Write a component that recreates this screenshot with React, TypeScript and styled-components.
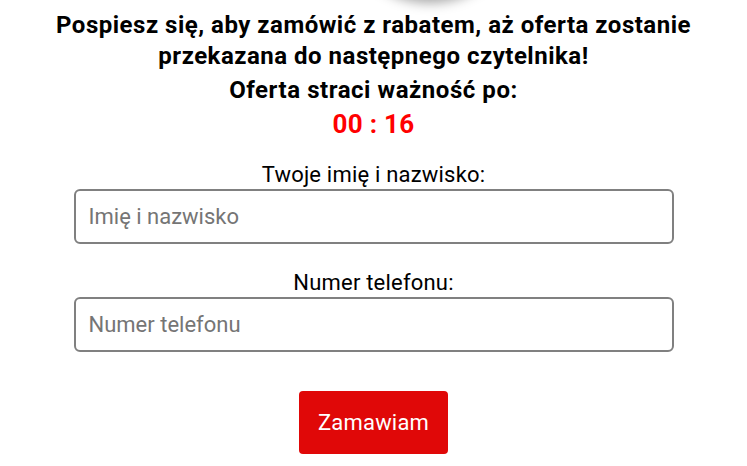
import { useState, useEffect } from 'react';
import styled, { createGlobalStyle } from "styled-components";

const GlobalStyle = createGlobalStyle`
    html, body {
        margin: 0;
        padding: 0;
        background: #ffffff;
        overflow: hidden;
    }
    body {
        font-family: Roboto, "Liberation Sans", Arial, sans-serif;
    }
`;

const Page = styled.div`
    position: relative;
    width: 747px;
    height: 466px;
    overflow: hidden;
    display: flex;
    flex-direction: column;
    align-items: center;
`;

// the product picture above is cut off, only its shadow shows
const ShadowBlob = styled.div`
    position: absolute;
    left: 340px;
    top: -180px;
    width: 180px;
    height: 180px;
    border-radius: 50%;
    background: #ffffff;
    box-shadow: 0 3px 12px rgba(0, 0, 0, 0.35);
`;

const Heading = styled.h2`
    margin: 10px 0 0 0;
    font-size: 24px;
    font-weight: 700;
    line-height: 31px;
    letter-spacing: 0.5px;
    text-align: center;
    color: #000;
    width: 690px;
`;

const SubHeading = styled.h3`
    margin: 4px 0 0 0;
    font-size: 24px;
    font-weight: 700;
    line-height: 28px;
    letter-spacing: 0.55px;
    color: #000;
`;

const Timer = styled.div`
    margin-top: 4px;
    font-size: 26px;
    font-weight: 700;
    line-height: 32px;
    letter-spacing: 0.3px;
    color: #ff0000;
`;

const Form = styled.form`
    margin-top: 22px;
    width: 600px;
    display: flex;
    flex-direction: column;
    align-items: center;
`;

const Label = styled.label`
    font-size: 22px;
    line-height: 25px;
    letter-spacing: 0.2px;
    color: #000;
    margin-bottom: 2px;
`;

const Field = styled.input<{ $last?: boolean }>`
    box-sizing: border-box;
    width: 600px;
    height: 55px;
    border: 2px solid #808080;
    border-radius: 6px;
    padding: 0 13px;
    font-family: Roboto, "Liberation Sans", Arial, sans-serif;
    font-size: 22px;
    color: #000;
    outline: none;
    margin-bottom: ${(p) => (p.$last ? "39px" : "26px")};

    &::placeholder {
        color: #757575;
    }
`;

const SubmitButton = styled.button`
    width: 149px;
    height: 63px;
    border: none;
    border-radius: 4px;
    background-color: #e00808;
    color: #ffffff;
    font-family: Roboto, "Liberation Sans", Arial, sans-serif;
    font-size: 22px;
    letter-spacing: 0.2px;
    cursor: pointer;
`;

export default function App() {
    const [secs, setSecs] = useState(16);
    const [name, setName] = useState("");
    const [phone, setPhone] = useState("");

    useEffect(() => {
        // frozen at 16 for the screenshot; counting would drift the picture
        setSecs(16);
    }, []);

    const mm = String(Math.floor(secs / 60)).padStart(2, "0");
    const ss = String(secs % 60).padStart(2, "0");

    return (
        <Page>
            <GlobalStyle />
            <ShadowBlob />
            <Heading>Pospiesz się, aby zamówić z rabatem, aż oferta zostanie przekazana do następnego czytelnika!</Heading>
            <SubHeading>Oferta straci ważność po:</SubHeading>
            <Timer>{mm} : {ss}</Timer>
            <Form onSubmit={(e) => e.preventDefault()}>
                <Label htmlFor="name">Twoje imię i nazwisko:</Label>
                <Field id="name" placeholder="Imię i nazwisko" value={name} onChange={(e) => setName(e.target.value)} />
                <Label htmlFor="phone">Numer telefonu:</Label>
                <Field $last id="phone" placeholder="Numer telefonu" value={phone} onChange={(e) => setPhone(e.target.value)} />
                <SubmitButton type="submit">Zamawiam</SubmitButton>
            </Form>
        </Page>
    );
}
